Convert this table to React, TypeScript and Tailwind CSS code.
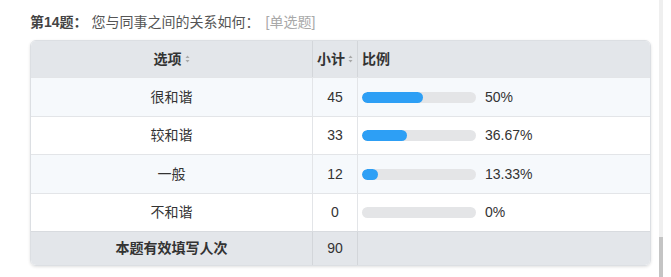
const rows = [
  { label: "很和谐", count: 45, pct: "50%", fill: 61, bg: "bg-[#f6f9fc]" },
  { label: "较和谐", count: 33, pct: "36.67%", fill: 45, bg: "bg-white" },
  { label: "一般", count: 12, pct: "13.33%", fill: 16, bg: "bg-[#f6f9fc]" },
  { label: "不和谐", count: 0, pct: "0%", fill: 0, bg: "bg-white" },
];

const SortIcon = () => (
  <svg width="5" height="8" viewBox="0 0 5 8" className="ml-[3px] inline-block">
    <path d="M2.5 0.5 L4.5 3 L0.5 3 Z" fill="#a8a8a8" />
    <path d="M2.5 7.5 L4.5 5 L0.5 5 Z" fill="#a8a8a8" />
  </svg>
);

const App = () => {
  return (
    <div
      className="flex h-[277px] w-[671px] bg-white text-[14px] text-[#333]"
      style={{ fontFamily: '"Liberation Sans", "Noto Sans CJK SC", sans-serif' }}
    >
      <div className="w-[658px] pl-[30px] pt-[12px]">
        <div className="flex h-[20px] items-center">
          <span className="font-semibold text-[#444]">第14题：</span>
          <span className="ml-[4px] text-[#555]">您与同事之间的关系如何：</span>
          <span className="ml-[6px] text-[#a9a9a9]">[单选题]</span>
        </div>

        <div className="mt-[8px] w-[621px] overflow-hidden rounded-[6px] border border-[#dcdfe3] shadow-[0_1px_3px_rgba(0,0,0,0.12)]">
          <div className="grid h-[36px] grid-cols-[282px_45px_1fr] bg-[#e3e6ea] font-bold">
            <div className="flex items-center justify-center border-r border-[#d3d6da]">
              选项
              <SortIcon />
            </div>
            <div className="flex items-center justify-center border-r border-[#d3d6da]">
              小计
              <SortIcon />
            </div>
            <div className="flex items-center pl-[4px]">比例</div>
          </div>

          {rows.map((r, i) => (
            <div
              key={r.label}
              className={`grid grid-cols-[282px_45px_1fr] border-t border-[#e3e5e8] ${r.bg} ${
                i % 2 === 0 ? "h-[39px]" : "h-[38px]"
              }`}
            >
              <div className="flex items-center justify-center border-r border-[#e3e5e8]">
                {r.label}
              </div>
              <div className="flex items-center justify-center border-r border-[#e3e5e8]">
                {r.count}
              </div>
              <div className="flex items-center pl-[4px]">
                <div className="h-[11px] w-[114px] overflow-hidden rounded-full bg-[#e4e5e7]">
                  <div
                    className="h-full rounded-full bg-[#2d9ff5]"
                    style={{ width: r.fill }}
                  />
                </div>
                <span className="ml-[9px]">{r.pct}</span>
              </div>
            </div>
          ))}

          <div className="grid h-[34px] grid-cols-[282px_45px_1fr] border-t border-[#d8dbdf] bg-[#e3e6ea]">
            <div className="flex items-center justify-center border-r border-[#d3d6da] font-bold">
              本题有效填写人次
            </div>
            <div className="flex items-center justify-center border-r border-[#d3d6da]">
              90
            </div>
            <div />
          </div>
        </div>
      </div>

      <div className="ml-[1px] flex w-[4px] flex-col bg-[#efefef]">
        <div className="flex-1" />
        <div className="h-[40px] bg-[#c4c4c4]" />
      </div>
    </div>
  );
};

export default App;
